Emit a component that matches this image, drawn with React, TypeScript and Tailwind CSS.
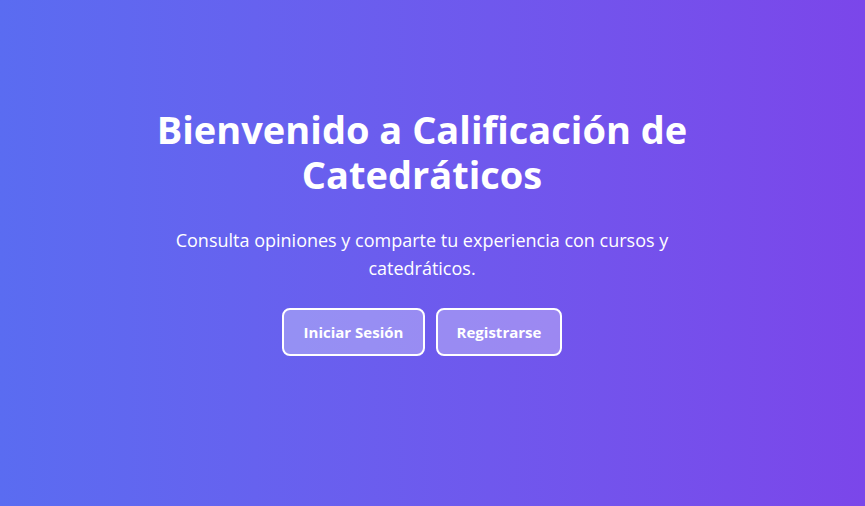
import React from "react";

export default function App() {
  return (
    <div
      className="w-full h-[506px] flex flex-col items-center pr-[21px] bg-gradient-to-r from-[#5a6cf1] to-[#7b46ea] text-white"
      style={{ fontFamily: '"Open Sans", "Noto Sans", sans-serif' }}
    >
      <div className="max-w-[600px] flex flex-col items-center text-center pt-[107px]">
        <h1 className="text-[38px] leading-[45px] font-bold">
          Bienvenido a Calificación de Catedráticos
        </h1>
        <p className="mt-[29px] text-[18px] leading-[28px]">
          Consulta opiniones y comparte tu experiencia con cursos y catedráticos.
        </p>
        <div className="mt-[26px] flex gap-[11px]">
          <button className="h-[48px] w-[143px] rounded-lg border-2 border-white bg-white/30 text-[15px] font-bold text-white">
            Iniciar Sesión
          </button>
          <button className="h-[48px] w-[126px] rounded-lg border-2 border-white bg-white/30 text-[15px] font-bold text-white">
            Registrarse
          </button>
        </div>
      </div>
    </div>
  );
}
